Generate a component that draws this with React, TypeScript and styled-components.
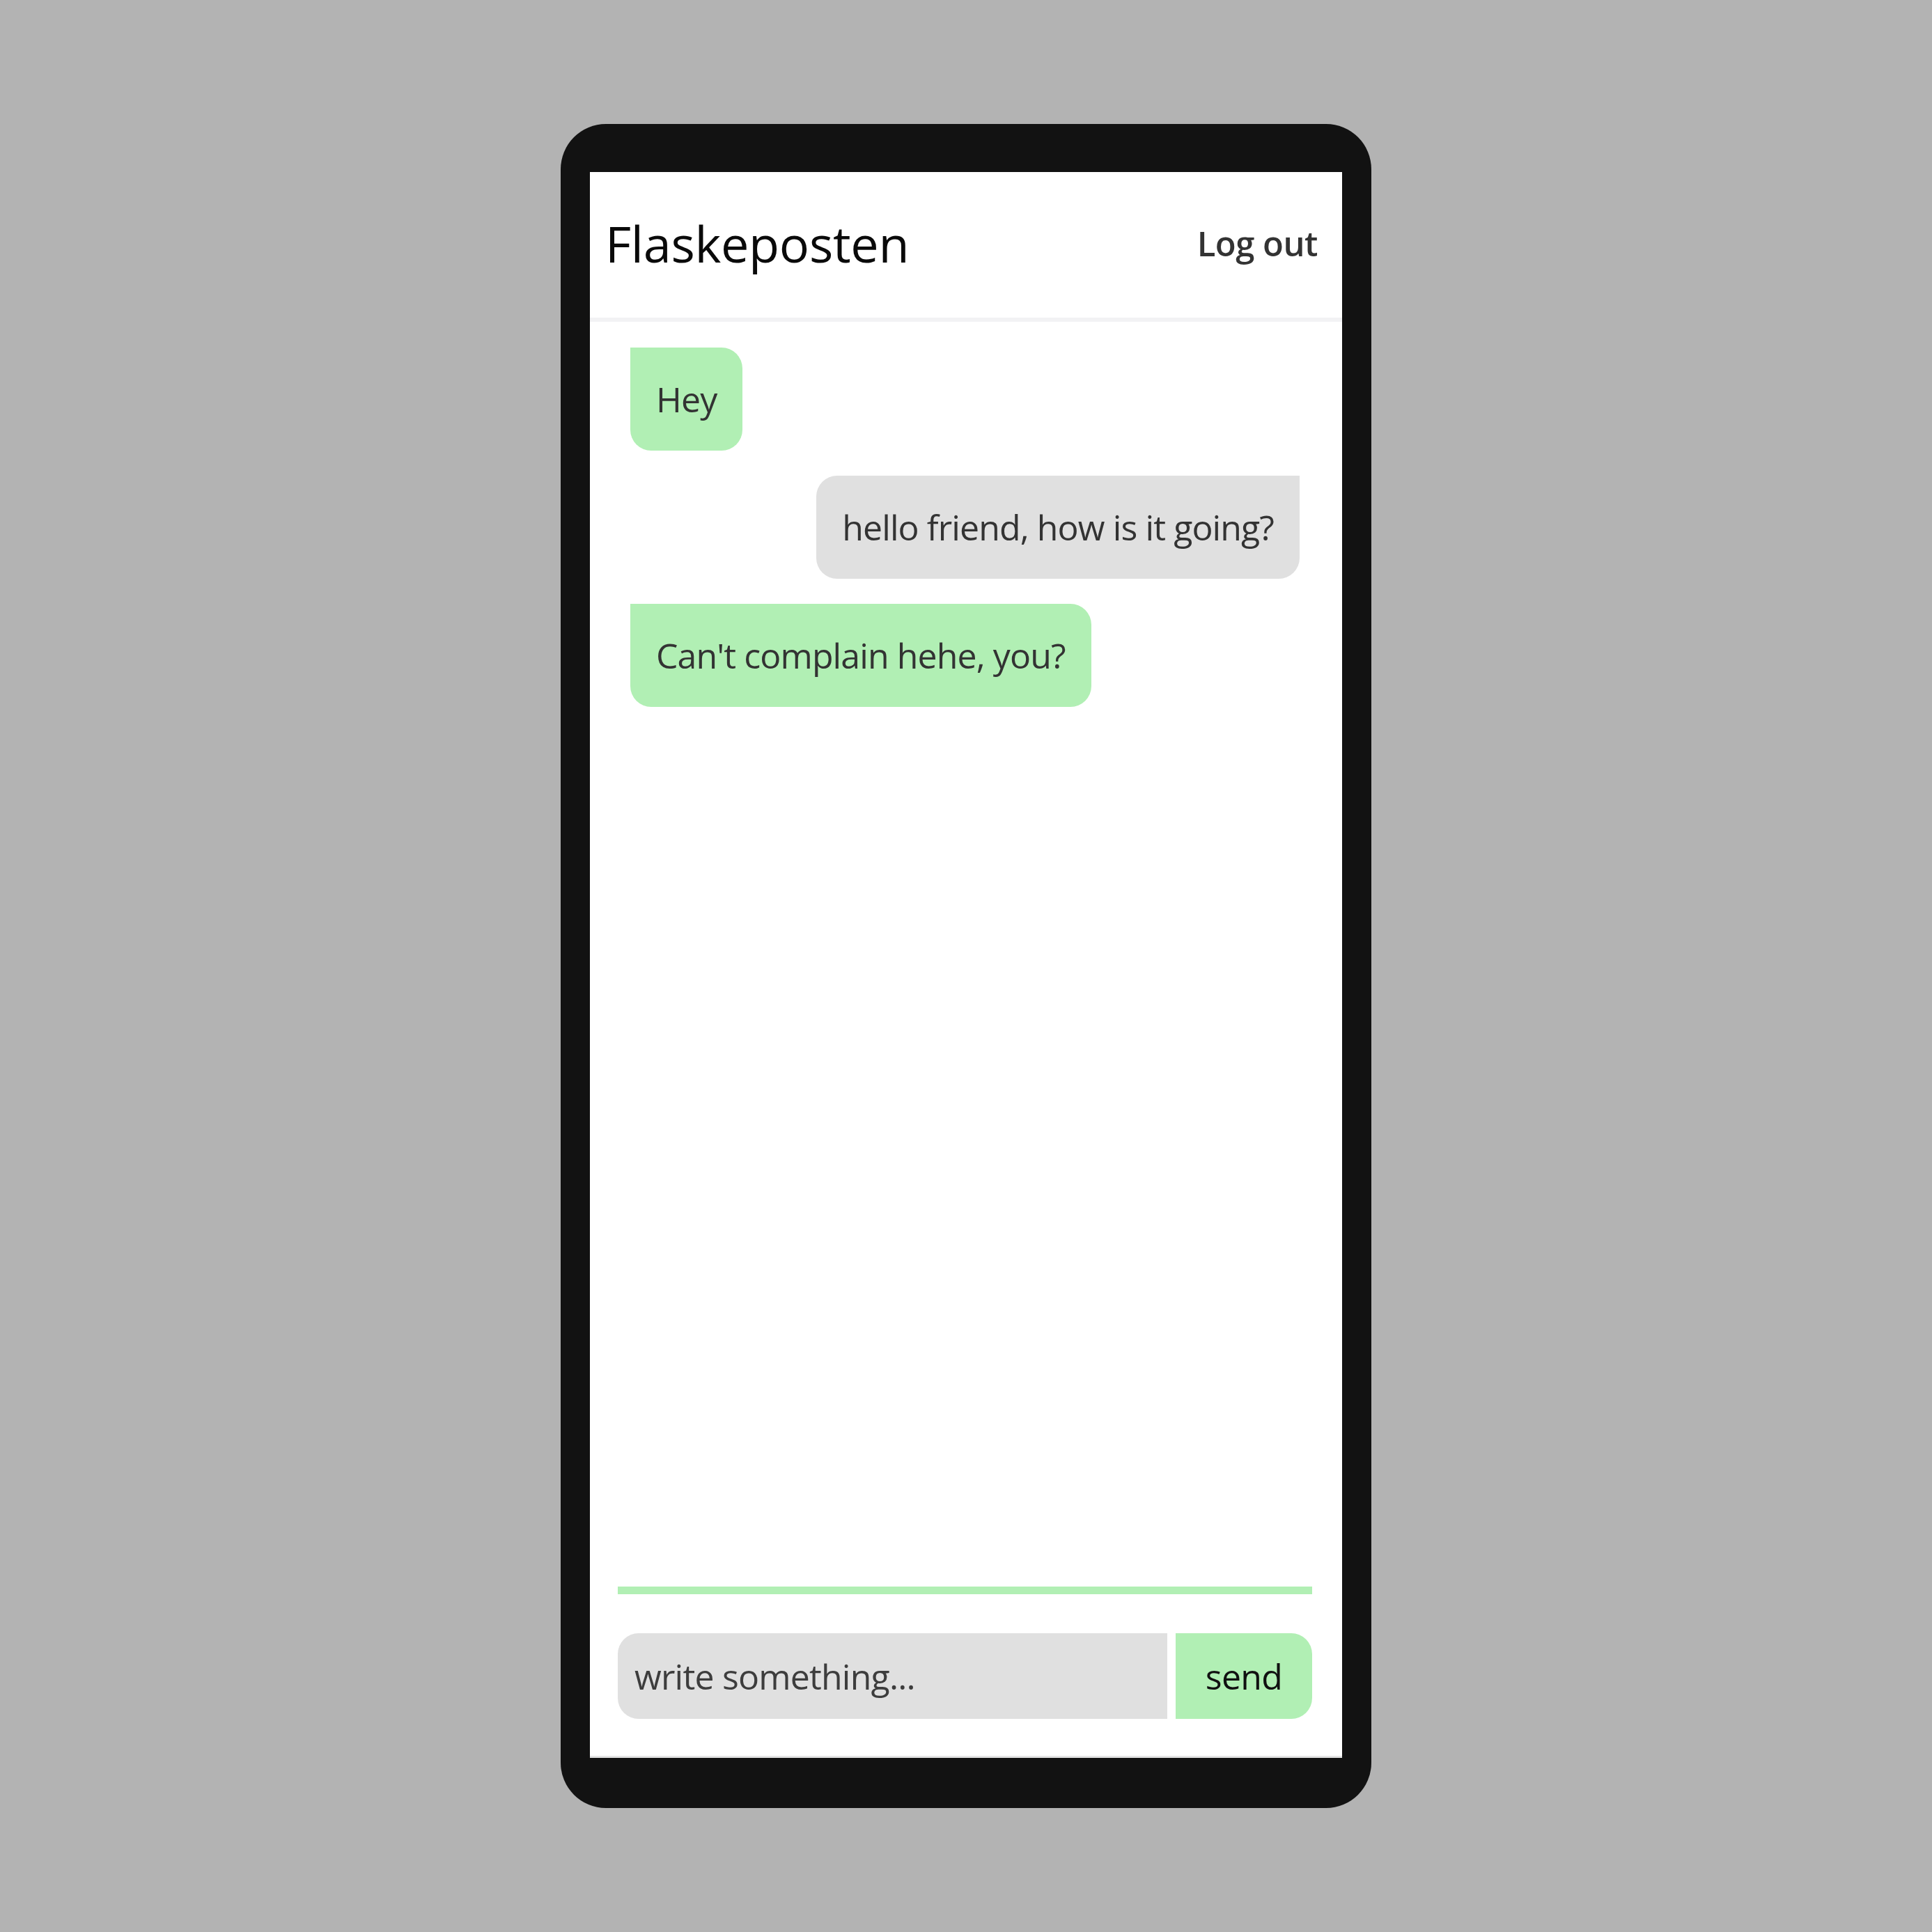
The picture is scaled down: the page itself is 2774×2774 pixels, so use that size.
import React from "react";
import styled, { createGlobalStyle } from "styled-components";

const GlobalStyle = createGlobalStyle`
  html, body {
    margin: 0;
    padding: 0;
    background: #b3b3b3;
  }
  * { box-sizing: border-box; }
`;

const Page = styled.div`
  width: 2774px;
  height: 2774px;
  display: flex;
  align-items: center;
  justify-content: center;
  background: #b3b3b3;
  font-family: "Open Sans", "Noto Sans", sans-serif;
`;

const PhoneFrame = styled.div`
  background: #121212;
  border-radius: 65px;
  padding: 69px 42px 72px 42px;
`;

const Screen = styled.div`
  width: 1080px;
  height: 2277px;
  background: #ffffff;
  display: flex;
  flex-direction: column;
  border-bottom: 3px solid #e4e4e4;
`;

const Header = styled.header`
  height: 215px;
  flex-shrink: 0;
  display: flex;
  align-items: center;
  justify-content: space-between;
  padding: 0 35px 5px 22px;
  border-bottom: 6px solid #f2f2f4;
`;

const Title = styled.h1`
  margin: 0;
  font-size: 72px;
  font-weight: 400;
  color: #0a0a0a;
  letter-spacing: -0.3px;
`;

const LogOut = styled.a`
  font-size: 49px;
  font-weight: 600;
  color: #333333;
  text-decoration: none;
  letter-spacing: -0.5px;
`;

const Messages = styled.main`
  flex: 1;
  display: flex;
  flex-direction: column;
  align-items: flex-start;
  gap: 36px;
  padding: 37px 61px 0 58px;
`;

const Bubble = styled.div<{ $mine: boolean }>`
  align-self: ${(p) => (p.$mine ? "flex-start" : "flex-end")};
  background: ${(p) => (p.$mine ? "#b1efb4" : "#e0e0e0")};
  border-radius: ${(p) => (p.$mine ? "0 30px 30px 30px" : "30px 0 30px 30px")};
  padding: 40px 37px;
  font-size: 50px;
  line-height: 68px;
  letter-spacing: -0.9px;
  color: #333333;
  white-space: nowrap;
`;

const Footer = styled.footer`
  flex-shrink: 0;
  margin: 0 43px 0 40px;
  border-top: 11px solid #b1efb4;
  padding: 56px 0 53px;
`;

const Form = styled.form`
  display: flex;
  gap: 12px;
  height: 123px;
`;

const Input = styled.input`
  flex: 1;
  min-width: 0;
  height: 100%;
  border: none;
  outline: none;
  background: #e0e0e0;
  border-radius: 30px 0 0 30px;
  padding: 0 0 0 24px;
  font-family: "Open Sans", "Noto Sans", sans-serif;
  font-size: 50px;
  letter-spacing: -0.8px;
  color: #333333;
  &::placeholder {
    color: #3d3d3d;
    opacity: 1;
  }
`;

const SendButton = styled.button`
  width: 196px;
  height: 100%;
  border: none;
  background: #b1efb4;
  border-radius: 0 30px 30px 0;
  font-family: "Open Sans", "Noto Sans", sans-serif;
  font-size: 50px;
  letter-spacing: -0.7px;
  color: #111111;
  padding: 0;
  cursor: pointer;
`;

const messages = [
  { text: "Hey", mine: true },
  { text: "hello friend, how is it going?", mine: false },
  { text: "Can't complain hehe, you?", mine: true },
];

export default function App() {
  return (
    <>
      <GlobalStyle />
      <Page>
        <PhoneFrame>
          <Screen>
            <Header>
              <Title>Flaskeposten</Title>
              <LogOut href="#">Log out</LogOut>
            </Header>
            <Messages>
              {messages.map((m, i) => (
                <Bubble key={i} $mine={m.mine}>
                  {m.text}
                </Bubble>
              ))}
            </Messages>
            <Footer>
              <Form onSubmit={(e) => e.preventDefault()}>
                <Input placeholder="write something..." />
                <SendButton type="submit">send</SendButton>
              </Form>
            </Footer>
          </Screen>
        </PhoneFrame>
      </Page>
    </>
  );
}
